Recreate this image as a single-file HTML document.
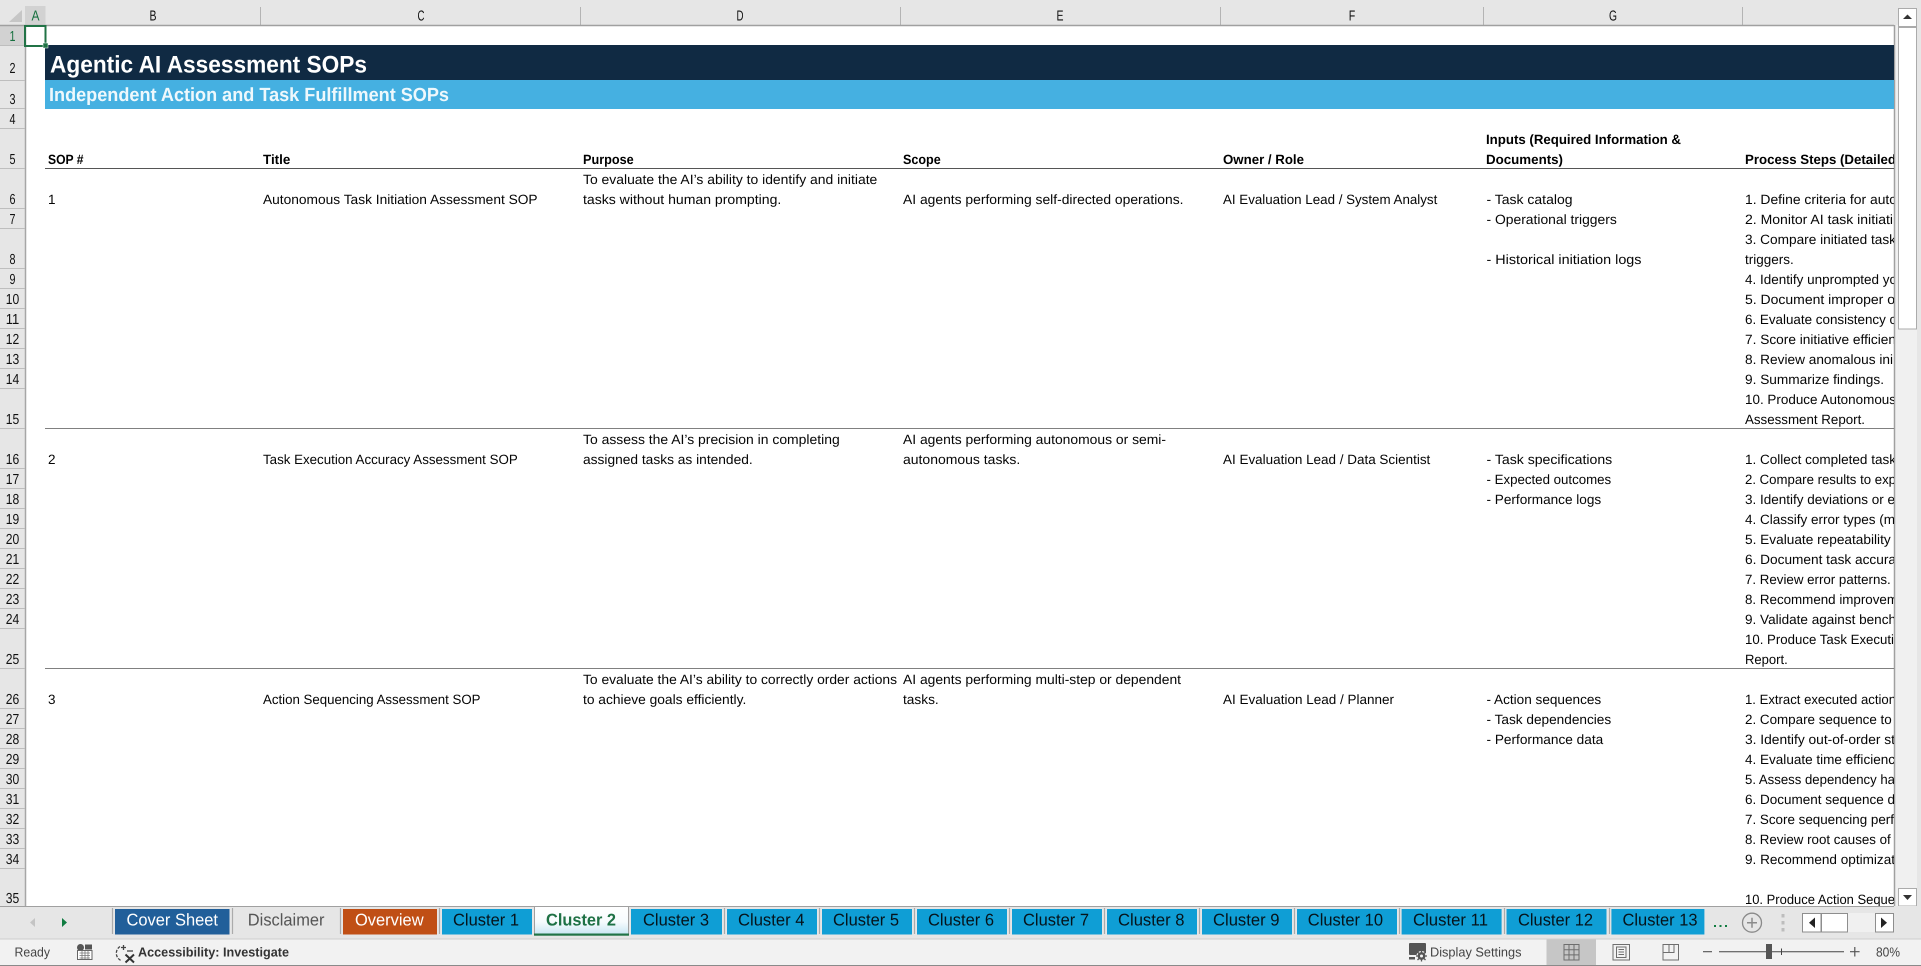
<!DOCTYPE html>
<html lang="en">
<head>
<meta charset="utf-8">
<title>Agentic AI Assessment SOPs</title>
<style>
html,body{margin:0;padding:0;background:#fff;width:1921px;height:966px;overflow:hidden}
svg{display:block;font-family:"Liberation Sans",Arial,sans-serif;text-rendering:geometricPrecision}
.b{font-size:13.5px;fill:#050505}
.h{font-size:13.5px;font-weight:700;fill:#000}
.n{font-size:14.500px;fill:#111;text-anchor:middle}
.t{font-size:17px;fill:#06141c}
.s{font-size:13px;fill:#444}
</style>
</head>
<body>
<svg width="1921" height="966" viewBox="0 0 1921 966" xmlns="http://www.w3.org/2000/svg">
<defs>
<clipPath id="g"><rect x="45" y="26" width="1849" height="880"/></clipPath>
<linearGradient id="at" x1="0" y1="0" x2="0" y2="1"><stop offset="0" stop-color="#ffffff"/><stop offset=".55" stop-color="#f6fbfd"/><stop offset="1" stop-color="#c9e6f3"/></linearGradient>
</defs>

<!-- chrome backgrounds -->
<rect width="1921" height="25" fill="#E6E6E6"/>
<rect x="0" y="0" width="25" height="906" fill="#E6E6E6"/>
<rect x="1894" y="25" width="27" height="881" fill="#F0F0F0"/>
<rect x="1917" y="0" width="4" height="906" fill="#E6E6E6"/>

<!-- selected headers -->
<rect x="25" y="6" width="20.5" height="19" fill="#D2D2D2"/>
<rect x="0" y="25" width="25" height="20" fill="#D2D2D2"/>
<polygon points="22,10 22,22 9,22" fill="#C6C6C6"/>

<!-- column separators -->
<g stroke="#B4B4B4" stroke-width="1">
<path d="M260.500 7V25M580.500 7V25M900.500 7V25M1220.500 7V25M1483.500 7V25M1742.500 7V25"/>
</g>
<path d="M0 25.500H1894" stroke="#A0A0A0" stroke-width="1.500"/>
<path d="M25.500 25V906" stroke="#A6A6A6" stroke-width="1.500"/>
<path d="M1894.500 25V906" stroke="#A0A0A0" stroke-width="1.500"/>

<!-- row separators -->
<path stroke="#BEBEBE" stroke-width="1" d="M0 45.500H25M0 80.500H25M0 108.500H25M0 128.500H25M0 168.500H25M0 208.500H25M0 228.500H25M0 268.500H25M0 288.500H25M0 308.500H25M0 328.500H25M0 348.500H25M0 368.500H25M0 388.500H25M0 428.500H25M0 468.500H25M0 488.500H25M0 508.500H25M0 528.500H25M0 548.500H25M0 568.500H25M0 588.500H25M0 608.500H25M0 628.500H25M0 668.500H25M0 708.500H25M0 728.500H25M0 748.500H25M0 768.500H25M0 788.500H25M0 808.500H25M0 828.500H25M0 848.500H25M0 868.500H25"/>

<!-- column labels -->
<text x="35.500" y="20.500" class="n" style="fill:#17703f" textLength="8" lengthAdjust="spacingAndGlyphs">A</text>
<text x="153" y="20.500" class="n" textLength="7" lengthAdjust="spacingAndGlyphs">B</text>
<text x="421" y="20.500" class="n" textLength="7" lengthAdjust="spacingAndGlyphs">C</text>
<text x="740" y="20.500" class="n" textLength="7" lengthAdjust="spacingAndGlyphs">D</text>
<text x="1060" y="20.500" class="n" textLength="7" lengthAdjust="spacingAndGlyphs">E</text>
<text x="1352" y="20.500" class="n" textLength="6.500" lengthAdjust="spacingAndGlyphs">F</text>
<text x="1613" y="20.500" class="n" textLength="8" lengthAdjust="spacingAndGlyphs">G</text>

<!-- row labels -->
<g>
<text x="12.500" y="41" class="n" style="fill:#17703f" textLength="6" lengthAdjust="spacingAndGlyphs">1</text>
<text x="12.500" y="73" class="n" textLength="6" lengthAdjust="spacingAndGlyphs">2</text>
<text x="12.500" y="104" class="n" textLength="6" lengthAdjust="spacingAndGlyphs">3</text>
<text x="12.500" y="124" class="n" textLength="6" lengthAdjust="spacingAndGlyphs">4</text>
<text x="12.500" y="164" class="n" textLength="6" lengthAdjust="spacingAndGlyphs">5</text>
<text x="12.500" y="204" class="n" textLength="6" lengthAdjust="spacingAndGlyphs">6</text>
<text x="12.500" y="224" class="n" textLength="6" lengthAdjust="spacingAndGlyphs">7</text>
<text x="12.500" y="264" class="n" textLength="6" lengthAdjust="spacingAndGlyphs">8</text>
<text x="12.500" y="284" class="n" textLength="6" lengthAdjust="spacingAndGlyphs">9</text>
<text x="12.500" y="304" class="n" textLength="13.500" lengthAdjust="spacingAndGlyphs">10</text>
<text x="12.500" y="324" class="n" textLength="13.500" lengthAdjust="spacingAndGlyphs">11</text>
<text x="12.500" y="344" class="n" textLength="13.500" lengthAdjust="spacingAndGlyphs">12</text>
<text x="12.500" y="364" class="n" textLength="13.500" lengthAdjust="spacingAndGlyphs">13</text>
<text x="12.500" y="384" class="n" textLength="13.500" lengthAdjust="spacingAndGlyphs">14</text>
<text x="12.500" y="424" class="n" textLength="13.500" lengthAdjust="spacingAndGlyphs">15</text>
<text x="12.500" y="464" class="n" textLength="13.500" lengthAdjust="spacingAndGlyphs">16</text>
<text x="12.500" y="484" class="n" textLength="13.500" lengthAdjust="spacingAndGlyphs">17</text>
<text x="12.500" y="504" class="n" textLength="13.500" lengthAdjust="spacingAndGlyphs">18</text>
<text x="12.500" y="524" class="n" textLength="13.500" lengthAdjust="spacingAndGlyphs">19</text>
<text x="12.500" y="544" class="n" textLength="13.500" lengthAdjust="spacingAndGlyphs">20</text>
<text x="12.500" y="564" class="n" textLength="13.500" lengthAdjust="spacingAndGlyphs">21</text>
<text x="12.500" y="584" class="n" textLength="13.500" lengthAdjust="spacingAndGlyphs">22</text>
<text x="12.500" y="604" class="n" textLength="13.500" lengthAdjust="spacingAndGlyphs">23</text>
<text x="12.500" y="624" class="n" textLength="13.500" lengthAdjust="spacingAndGlyphs">24</text>
<text x="12.500" y="664" class="n" textLength="13.500" lengthAdjust="spacingAndGlyphs">25</text>
<text x="12.500" y="704" class="n" textLength="13.500" lengthAdjust="spacingAndGlyphs">26</text>
<text x="12.500" y="724" class="n" textLength="13.500" lengthAdjust="spacingAndGlyphs">27</text>
<text x="12.500" y="744" class="n" textLength="13.500" lengthAdjust="spacingAndGlyphs">28</text>
<text x="12.500" y="764" class="n" textLength="13.500" lengthAdjust="spacingAndGlyphs">29</text>
<text x="12.500" y="784" class="n" textLength="13.500" lengthAdjust="spacingAndGlyphs">30</text>
<text x="12.500" y="804" class="n" textLength="13.500" lengthAdjust="spacingAndGlyphs">31</text>
<text x="12.500" y="824" class="n" textLength="13.500" lengthAdjust="spacingAndGlyphs">32</text>
<text x="12.500" y="844" class="n" textLength="13.500" lengthAdjust="spacingAndGlyphs">33</text>
<text x="12.500" y="864" class="n" textLength="13.500" lengthAdjust="spacingAndGlyphs">34</text>
<text x="12.500" y="903" class="n" textLength="13.500" lengthAdjust="spacingAndGlyphs">35</text>
</g>

<!-- banners -->
<rect x="45" y="45" width="1849" height="35" fill="#102A43"/>
<rect x="45" y="80" width="1849" height="29" fill="#45B0E1"/>
<text x="50" y="72.500" font-size="24" font-weight="700" fill="#fff" textLength="317" lengthAdjust="spacingAndGlyphs">Agentic AI Assessment SOPs</text>
<text x="49" y="101" font-size="19" font-weight="700" fill="#eef8fc" textLength="400" lengthAdjust="spacingAndGlyphs">Independent Action and Task Fulfillment SOPs</text>

<!-- header + row lines -->
<path d="M45 168.500H1894" stroke="#555" stroke-width="1"/>
<path d="M45 428.500H1894M45 668.500H1894" stroke="#808080" stroke-width="1"/>

<g clip-path="url(#g)">
<text x="48" y="164" class="h" textLength="35.500" lengthAdjust="spacingAndGlyphs">SOP #</text>
<text x="263" y="164" class="h" textLength="27.300" lengthAdjust="spacingAndGlyphs">Title</text>
<text x="583" y="164" class="h" textLength="50.700" lengthAdjust="spacingAndGlyphs">Purpose</text>
<text x="903" y="164" class="h" textLength="37.700" lengthAdjust="spacingAndGlyphs">Scope</text>
<text x="1223" y="164" class="h" textLength="81" lengthAdjust="spacingAndGlyphs">Owner / Role</text>
<text x="1486" y="144" class="h" textLength="195" lengthAdjust="spacingAndGlyphs">Inputs (Required Information &amp;</text>
<text x="1486" y="164" class="h" textLength="77" lengthAdjust="spacingAndGlyphs">Documents)</text>
<text x="1745" y="164" class="h" textLength="151" lengthAdjust="spacingAndGlyphs">Process Steps (Detailed</text>

<!-- SOP 1 -->
<text x="48" y="204" class="b">1</text>
<text x="263" y="204" class="b" textLength="274.600" lengthAdjust="spacingAndGlyphs">Autonomous Task Initiation Assessment SOP</text>
<text x="583" y="184" class="b" textLength="294.300" lengthAdjust="spacingAndGlyphs">To evaluate the AI’s ability to identify and initiate</text>
<text x="583" y="204" class="b" textLength="198.300" lengthAdjust="spacingAndGlyphs">tasks without human prompting.</text>
<text x="903" y="204" class="b" textLength="280.500" lengthAdjust="spacingAndGlyphs">AI agents performing self-directed operations.</text>
<text x="1223" y="204" class="b" textLength="214.300" lengthAdjust="spacingAndGlyphs">AI Evaluation Lead / System Analyst</text>
<text x="1486.500" y="204" class="b" textLength="86" lengthAdjust="spacingAndGlyphs">- Task catalog</text>
<text x="1486.500" y="224" class="b" textLength="130.300" lengthAdjust="spacingAndGlyphs">- Operational triggers</text>
<text x="1486.500" y="264" class="b" textLength="155" lengthAdjust="spacingAndGlyphs">- Historical initiation logs</text>
<text x="1745" y="204" class="b" textLength="152" lengthAdjust="spacingAndGlyphs">1. Define criteria for auto</text>
<text x="1745" y="224" class="b" textLength="148" lengthAdjust="spacingAndGlyphs">2. Monitor AI task initiati</text>
<text x="1745" y="244" class="b" textLength="151" lengthAdjust="spacingAndGlyphs">3. Compare initiated task</text>
<text x="1745" y="264" class="b" textLength="48.700" lengthAdjust="spacingAndGlyphs">triggers.</text>
<text x="1745" y="284" class="b" textLength="152" lengthAdjust="spacingAndGlyphs">4. Identify unprompted yo</text>
<text x="1745" y="304" class="b" textLength="150" lengthAdjust="spacingAndGlyphs">5. Document improper o</text>
<text x="1745" y="324" class="b" textLength="152" lengthAdjust="spacingAndGlyphs">6. Evaluate consistency o</text>
<text x="1745" y="344" class="b" textLength="151" lengthAdjust="spacingAndGlyphs">7. Score initiative efficien</text>
<text x="1745" y="364" class="b" textLength="148" lengthAdjust="spacingAndGlyphs">8. Review anomalous ini</text>
<text x="1745" y="384" class="b" textLength="139" lengthAdjust="spacingAndGlyphs">9. Summarize findings.</text>
<text x="1745" y="404" class="b" textLength="151" lengthAdjust="spacingAndGlyphs">10. Produce Autonomous</text>
<text x="1745" y="424" class="b" textLength="120" lengthAdjust="spacingAndGlyphs">Assessment Report.</text>

<!-- SOP 2 -->
<text x="48" y="464" class="b">2</text>
<text x="263" y="464" class="b" textLength="254.700" lengthAdjust="spacingAndGlyphs">Task Execution Accuracy Assessment SOP</text>
<text x="583" y="444" class="b" textLength="256.700" lengthAdjust="spacingAndGlyphs">To assess the AI’s precision in completing</text>
<text x="583" y="464" class="b" textLength="169.700" lengthAdjust="spacingAndGlyphs">assigned tasks as intended.</text>
<text x="903" y="444" class="b" textLength="263" lengthAdjust="spacingAndGlyphs">AI agents performing autonomous or semi-</text>
<text x="903" y="464" class="b" textLength="117.300" lengthAdjust="spacingAndGlyphs">autonomous tasks.</text>
<text x="1223" y="464" class="b" textLength="207.300" lengthAdjust="spacingAndGlyphs">AI Evaluation Lead / Data Scientist</text>
<text x="1486.500" y="464" class="b" textLength="125.700" lengthAdjust="spacingAndGlyphs">- Task specifications</text>
<text x="1486.500" y="484" class="b" textLength="124.700" lengthAdjust="spacingAndGlyphs">- Expected outcomes</text>
<text x="1486.500" y="504" class="b" textLength="114.700" lengthAdjust="spacingAndGlyphs">- Performance logs</text>
<text x="1745" y="464" class="b" textLength="151" lengthAdjust="spacingAndGlyphs">1. Collect completed task</text>
<text x="1745" y="484" class="b" textLength="151" lengthAdjust="spacingAndGlyphs">2. Compare results to exp</text>
<text x="1745" y="504" class="b" textLength="150" lengthAdjust="spacingAndGlyphs">3. Identify deviations or e</text>
<text x="1745" y="524" class="b" textLength="150" lengthAdjust="spacingAndGlyphs">4. Classify error types (m</text>
<text x="1745" y="544" class="b" textLength="145.700" lengthAdjust="spacingAndGlyphs">5. Evaluate repeatability</text>
<text x="1745" y="564" class="b" textLength="151" lengthAdjust="spacingAndGlyphs">6. Document task accura</text>
<text x="1745" y="584" class="b" textLength="145.700" lengthAdjust="spacingAndGlyphs">7. Review error patterns.</text>
<text x="1745" y="604" class="b" textLength="153" lengthAdjust="spacingAndGlyphs">8. Recommend improvem</text>
<text x="1745" y="624" class="b" textLength="151" lengthAdjust="spacingAndGlyphs">9. Validate against bench</text>
<text x="1745" y="644" class="b" textLength="149" lengthAdjust="spacingAndGlyphs">10. Produce Task Executi</text>
<text x="1745" y="664" class="b" textLength="42.700" lengthAdjust="spacingAndGlyphs">Report.</text>

<!-- SOP 3 -->
<text x="48" y="704" class="b">3</text>
<text x="263" y="704" class="b" textLength="217.500" lengthAdjust="spacingAndGlyphs">Action Sequencing Assessment SOP</text>
<text x="583" y="684" class="b" textLength="314" lengthAdjust="spacingAndGlyphs">To evaluate the AI’s ability to correctly order actions</text>
<text x="583" y="704" class="b" textLength="163.300" lengthAdjust="spacingAndGlyphs">to achieve goals efficiently.</text>
<text x="903" y="684" class="b" textLength="278" lengthAdjust="spacingAndGlyphs">AI agents performing multi-step or dependent</text>
<text x="903" y="704" class="b" textLength="35.700" lengthAdjust="spacingAndGlyphs">tasks.</text>
<text x="1223" y="704" class="b" textLength="171" lengthAdjust="spacingAndGlyphs">AI Evaluation Lead / Planner</text>
<text x="1486.500" y="704" class="b" textLength="114.700" lengthAdjust="spacingAndGlyphs">- Action sequences</text>
<text x="1486.500" y="724" class="b" textLength="124.700" lengthAdjust="spacingAndGlyphs">- Task dependencies</text>
<text x="1486.500" y="744" class="b" textLength="116.700" lengthAdjust="spacingAndGlyphs">- Performance data</text>
<text x="1745" y="704" class="b" textLength="151" lengthAdjust="spacingAndGlyphs">1. Extract executed action</text>
<text x="1745" y="724" class="b" textLength="146.700" lengthAdjust="spacingAndGlyphs">2. Compare sequence to</text>
<text x="1745" y="744" class="b" textLength="150" lengthAdjust="spacingAndGlyphs">3. Identify out-of-order st</text>
<text x="1745" y="764" class="b" textLength="150" lengthAdjust="spacingAndGlyphs">4. Evaluate time efficienc</text>
<text x="1745" y="784" class="b" textLength="150" lengthAdjust="spacingAndGlyphs">5. Assess dependency ha</text>
<text x="1745" y="804" class="b" textLength="150" lengthAdjust="spacingAndGlyphs">6. Document sequence d</text>
<text x="1745" y="824" class="b" textLength="149" lengthAdjust="spacingAndGlyphs">7. Score sequencing perf</text>
<text x="1745" y="844" class="b" textLength="145.700" lengthAdjust="spacingAndGlyphs">8. Review root causes of</text>
<text x="1745" y="864" class="b" textLength="150" lengthAdjust="spacingAndGlyphs">9. Recommend optimizat</text>
<text x="1745" y="904" class="b" textLength="150" lengthAdjust="spacingAndGlyphs">10. Produce Action Seque</text>
</g>

<!-- selected cell -->
<rect x="25" y="26" width="20.500" height="20" fill="none" stroke="#217346" stroke-width="2"/>
<rect x="43" y="43" width="5" height="5" fill="#217346" stroke="#fff" stroke-width=".5"/>

<!-- vertical scrollbar -->
<rect x="1898.500" y="8.500" width="18" height="18" fill="#fff" stroke="#ABABAB"/>
<polygon points="1903,19 1912,19 1907.500,14.500" fill="#333"/>
<rect x="1898.500" y="27.500" width="18" height="301.500" fill="#fff" stroke="#ABABAB"/>
<rect x="1898.500" y="888.500" width="18" height="17.500" fill="#fff" stroke="#ABABAB"/>
<polygon points="1903,895 1912,895 1907.500,900" fill="#333"/>

<!-- tab strip -->
<rect x="0" y="906" width="1921" height="33" fill="#E6E6E6"/>
<path d="M0 906.500H1894" stroke="#A0A0A0" stroke-width="1"/>
<path d="M112.500 908V934M232.500 908V934M340.500 908V934M439.500 908V934M724.500 908V934M819.500 908V934M914.500 908V934M1009.500 908V934M1104.500 908V934M1199.500 908V934M1294.500 908V934M1399.500 908V934M1504.500 908V934M1609.500 908V934" stroke="#ABABAB" stroke-width="1.200"/>
<polygon points="35,918 35,927 30,922.500" fill="#C4C4C4"/>
<polygon points="62,918 62,927 67,922.500" fill="#107C41"/>

<rect x="115" y="909" width="114.500" height="25.500" fill="#215F9A"/>
<text x="126.500" y="925.500" class="t" style="fill:#fff" textLength="91.500" lengthAdjust="spacingAndGlyphs">Cover Sheet</text>
<text x="247.800" y="925.500" class="t" style="fill:#555" textLength="76.700" lengthAdjust="spacingAndGlyphs">Disclaimer</text>
<rect x="343" y="909" width="94" height="25.500" fill="#C04F15"/>
<text x="355" y="925.500" class="t" style="fill:#fff" textLength="68.600" lengthAdjust="spacingAndGlyphs">Overview</text>
<rect x="442" y="909" width="90" height="25.500" fill="#0F9ED5"/>
<text x="453" y="925.500" class="t" textLength="66" lengthAdjust="spacingAndGlyphs">Cluster 1</text>

<rect x="534.500" y="906.500" width="94" height="28" fill="url(#at)" stroke="#A0A0A0"/>
<rect x="534" y="933.500" width="95" height="2.200" fill="#217346"/>
<text x="546" y="925.500" class="t" style="fill:#1E7145;font-weight:700" textLength="70" lengthAdjust="spacingAndGlyphs">Cluster 2</text>

<rect x="631" y="909" width="91" height="25.500" fill="#0F9ED5"/>
<text x="643" y="925.500" class="t" textLength="66" lengthAdjust="spacingAndGlyphs">Cluster 3</text>
<rect x="727" y="909" width="90" height="25.500" fill="#0F9ED5"/>
<text x="738" y="925.500" class="t" textLength="66.500" lengthAdjust="spacingAndGlyphs">Cluster 4</text>
<rect x="822" y="909" width="90" height="25.500" fill="#0F9ED5"/>
<text x="833" y="925.500" class="t" textLength="66" lengthAdjust="spacingAndGlyphs">Cluster 5</text>
<rect x="917" y="909" width="90" height="25.500" fill="#0F9ED5"/>
<text x="928" y="925.500" class="t" textLength="66" lengthAdjust="spacingAndGlyphs">Cluster 6</text>
<rect x="1012" y="909" width="90" height="25.500" fill="#0F9ED5"/>
<text x="1023" y="925.500" class="t" textLength="66" lengthAdjust="spacingAndGlyphs">Cluster 7</text>
<rect x="1107" y="909" width="90" height="25.500" fill="#0F9ED5"/>
<text x="1118" y="925.500" class="t" textLength="66.500" lengthAdjust="spacingAndGlyphs">Cluster 8</text>
<rect x="1202" y="909" width="90" height="25.500" fill="#0F9ED5"/>
<text x="1213" y="925.500" class="t" textLength="66.500" lengthAdjust="spacingAndGlyphs">Cluster 9</text>
<rect x="1297" y="909" width="100" height="25.500" fill="#0F9ED5"/>
<text x="1307.800" y="925.500" class="t" textLength="75.200" lengthAdjust="spacingAndGlyphs">Cluster 10</text>
<rect x="1401.600" y="909" width="100" height="25.500" fill="#0F9ED5"/>
<text x="1413" y="925.500" class="t" textLength="75" lengthAdjust="spacingAndGlyphs">Cluster 11</text>
<rect x="1506.500" y="909" width="100" height="25.500" fill="#0F9ED5"/>
<text x="1518" y="925.500" class="t" textLength="75" lengthAdjust="spacingAndGlyphs">Cluster 12</text>
<rect x="1611.400" y="909" width="93" height="25.500" fill="#0F9ED5"/>
<text x="1622.500" y="925.500" class="t" textLength="75" lengthAdjust="spacingAndGlyphs">Cluster 13</text>

<g fill="#107C41"><rect x="1714" y="925" width="2" height="2"/><rect x="1719.500" y="925" width="2" height="2"/><rect x="1725" y="925" width="2" height="2"/></g>
<circle cx="1752" cy="922.700" r="9.500" fill="none" stroke="#8A8A8A" stroke-width="1.300"/>
<path d="M1747 922.700H1757M1752 917.700V927.700" stroke="#8A8A8A" stroke-width="1.500"/>
<g fill="#BDBDBD"><rect x="1781.500" y="914" width="3" height="3.500"/><rect x="1781.500" y="921" width="3" height="3.500"/><rect x="1781.500" y="928" width="3" height="3.500"/></g>

<rect x="1821" y="913" width="54" height="19" fill="#F0F0F0"/>
<rect x="1802.500" y="913.500" width="18.500" height="18.500" fill="#fff" stroke="#8E8E8E"/>
<polygon points="1815,917.500 1815,928 1809,922.700" fill="#222"/>
<rect x="1821.500" y="913.500" width="26" height="18.500" fill="#fff" stroke="#8E8E8E"/>
<rect x="1875.500" y="913.500" width="18" height="18.500" fill="#fff" stroke="#8E8E8E"/>
<polygon points="1881,917.500 1881,928 1887,922.700" fill="#222"/>

<!-- status bar -->
<rect x="0" y="938.500" width="1921" height="27.500" fill="#F2F2F2"/>
<path d="M0 939H1921" stroke="#CFCFCF" stroke-width="1"/>
<path d="M0 965.500H1921" stroke="#8A8A8A" stroke-width="1"/>
<text x="14.500" y="956.700" class="s" textLength="35.500" lengthAdjust="spacingAndGlyphs">Ready</text>

<!-- macro icon -->
<g>
<circle cx="80.500" cy="947.500" r="3.500" fill="#555"/>
<rect x="85" y="944.500" width="7" height="5" fill="#555"/>
<rect x="77.500" y="950.500" width="14.500" height="9" fill="#fff" stroke="#666"/>
<path d="M79.500 953H90M79.500 955.500H90M79.500 958H90M82 951V959M85 951V959M88 951V959" stroke="#777" stroke-width=".8"/>
</g>

<!-- accessibility icon -->
<g fill="none" stroke="#444" stroke-width="1.300">
<path d="M123.500 945V950M121 947.500H126"/>
<path d="M120 946.500A8 8 0 0 0 121 960.500" stroke-dasharray="3 1.500"/>
<path d="M127 951L133 951"/>
<path d="M125.500 954.500L134 962.500M134 954.500L125.500 962.500" stroke="#333" stroke-width="2"/>
</g>
<text x="138" y="956.700" font-size="13" font-weight="700" fill="#333" textLength="151" lengthAdjust="spacingAndGlyphs">Accessibility: Investigate</text>

<!-- display settings -->
<rect x="1409" y="943" width="17" height="12" rx="1" fill="#555"/>
<rect x="1409" y="957" width="6" height="2.500" fill="#555"/>
<circle cx="1421.500" cy="956" r="4.500" fill="#555" stroke="#F2F2F2" stroke-width="1.200"/>
<path d="M1421.500 950.500V961.500M1416 956H1427M1417.500 952L1425.500 960M1425.500 952L1417.500 960" stroke="#555" stroke-width="1.300"/>
<circle cx="1421.500" cy="956" r="1.500" fill="#F2F2F2"/>
<text x="1430" y="956.700" class="s" textLength="91.500" lengthAdjust="spacingAndGlyphs">Display Settings</text>

<rect x="1546.500" y="939.500" width="49.500" height="25.500" fill="#C6C6C6"/>
<g fill="none" stroke="#6E6E6E" stroke-width="1">
<rect x="1564" y="944.500" width="15" height="15.500"/>
<path d="M1569 944.500V960M1574 944.500V960M1564 949.700H1579M1564 954.900H1579"/>
<rect x="1613" y="944.500" width="16.500" height="15.500"/>
<rect x="1616.500" y="947" width="9.500" height="10.500"/>
<path d="M1618.500 949.500H1624M1618.500 952H1624M1618.500 954.500H1624"/>
<rect x="1663" y="944.500" width="15.500" height="15.500"/>
<path d="M1663 952.500H1674V944.500M1669 944.500V952.500"/>
</g>

<!-- zoom control -->
<path d="M1703 951.700H1712M1850 951.700H1859.600M1854.800 947V956.500" stroke="#555" stroke-width="1.200"/>
<path d="M1719 951.700H1844" stroke="#444" stroke-width="1"/>
<path d="M1781.500 948.500V955" stroke="#444" stroke-width="1"/>
<rect x="1766" y="944" width="6" height="15" fill="#555"/>
<text x="1876" y="956.700" class="s" textLength="24" lengthAdjust="spacingAndGlyphs">80%</text>
</svg>
</body>
</html>
